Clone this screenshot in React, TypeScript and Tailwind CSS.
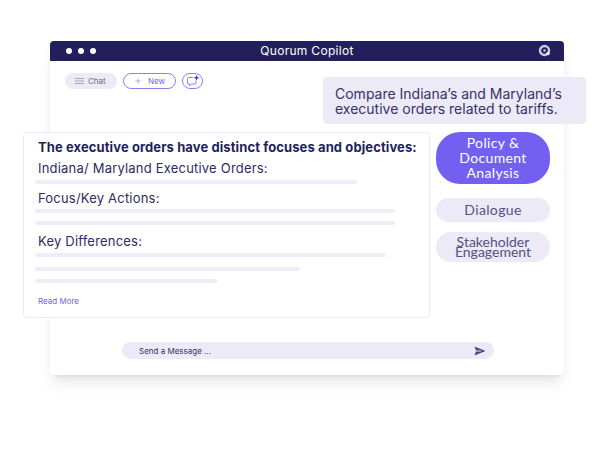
import { Plus } from "lucide-react";

const bar = "h-1 shrink-0 rounded-full bg-[#eeedf8]";
const line = "text-[13px] leading-5 tracking-[0.2px]";

export default function App() {
  return (
    <div className="w-[600px] h-[452px] bg-white pt-[41px] pl-[50px] overflow-hidden font-['Inter',sans-serif]">
      <div className="w-[514px] rounded-sm bg-white shadow-lg">
        <div className="h-5 grid grid-cols-3 items-center px-4 rounded-t-sm bg-[#231f5c]">
          <div className="flex gap-1.5">
            <div className="size-1.5 rounded-full bg-white" />
            <div className="size-1.5 rounded-full bg-white" />
            <div className="size-1.5 rounded-full bg-white" />
          </div>
          <span className="text-center text-xs tracking-wide whitespace-nowrap text-white">Quorum Copilot</span>
          <svg viewBox="0 0 14 14" className="size-3.5 justify-self-end -mr-1">
            <circle cx="6.5" cy="6.5" r="4.5" fill="none" stroke="#c9c8dc" strokeWidth="2.4" />
            <circle cx="6.5" cy="6.5" r="1.2" fill="#c9c8dc" />
            <circle cx="10" cy="9.5" r="1.7" fill="#fff" />
          </svg>
        </div>

        <div className="pt-3 pb-4">
          <div className="flex items-center gap-1.5 pl-[15px]">
            <div className="w-13 h-4 flex items-center gap-1 pl-2.5 rounded-full bg-[#eceaf6] text-[8px] text-[#6b6a80]">
              <svg viewBox="0 0 9 6" className="w-[9px] h-1.5" fill="none" stroke="#8a899c" strokeWidth="0.7">
                <path d="M0 0.5H9M0 3H9M0 5.5H9" />
              </svg>
              Chat
            </div>
            <div className="w-[53px] h-4 flex items-center justify-center gap-1.5 rounded-full border border-[#8f7ef5] text-[8px] text-[#7360f0]">
              <Plus className="size-2" strokeWidth={1.5} />
              New
            </div>
            <div className="w-[21px] h-4 flex items-center justify-center rounded-full border border-[#8f7ef5]">
              <svg viewBox="0 0 14 12" className="w-3.5 h-3" fill="none">
                <path d="M7 2.5H2.5a1 1 0 0 0-1 1V8a1 1 0 0 0 1 1h1v1.6L5.5 9H9a1 1 0 0 0 1-1V5.5" stroke="#7360f0" strokeWidth="0.8" />
                <path d="M10.5 0l.9 1.9 1.9.9-1.9.9-.9 1.9-.9-1.9-1.9-.9 1.9-.9z" fill="#4f3ce0" />
              </svg>
            </div>
          </div>

          <div className="flex justify-end -mt-3 -mr-[22px]">
            <div className="w-[263px] h-[47px] flex items-center pl-3 rounded-sm bg-[#eceaf6] text-sm leading-[15px] text-[#35316b]">
              <p>
                Compare Indiana’s and Maryland’s
                <br />
                executive orders related to tariffs.
              </p>
            </div>
          </div>

          <div className="flex gap-1.5 mt-2 -ml-[27px]">
            <div className="w-[407px] h-[186px] flex flex-col px-3.5 pt-1 rounded-sm border border-[#eceaf6] bg-white text-[#2f2b63]">
              <p className="text-[13px] leading-5 font-bold tracking-[0.1px] whitespace-nowrap text-[#231f5c]">
                The executive orders have distinct focuses and objectives:
              </p>
              <p className={`${line} mt-px`}>Indiana/ Maryland Executive Orders:</p>
              <div className={`${bar} w-[322px] mt-0.5 -ml-[3px]`} />
              <p className={`${line} mt-1`}>Focus/Key Actions:</p>
              <div className={`${bar} w-90 mt-px -ml-[3px]`} />
              <div className={`${bar} w-90 mt-2 -ml-[3px]`} />
              <p className={`${line} mt-1.5`}>Key Differences:</p>
              <div className={`${bar} w-[351px] mt-0.5 -ml-[3px]`} />
              <div className={`${bar} w-[265px] mt-2.5 -ml-[3px]`} />
              <div className={`${bar} w-[182px] mt-2 -ml-[3px]`} />
              <p className="mt-3 text-[8px] leading-3 text-[#7360f0]">Read More</p>
            </div>

            <div className="w-[114px] flex flex-col font-['Lato',sans-serif] text-sm text-center">
              <div className="h-[52px] flex items-center justify-center pb-0.5 rounded-3xl bg-[#7360f0] leading-[15px] tracking-wide text-white">
                <p>
                  Policy &amp;
                  <br />
                  Document
                  <br />
                  Analysis
                </p>
              </div>
              <div className="h-6 mt-3.5 flex items-center justify-center rounded-full bg-[#eceaf6] tracking-wide text-[#55527f]">
                Dialogue
              </div>
              <div className="h-7.5 mt-2.5 flex items-center justify-center rounded-full bg-[#eceaf6] leading-[10px] text-[#55527f]">
                <p>
                  Stakeholder
                  <br />
                  Engagement
                </p>
              </div>
            </div>
          </div>

          <div className="ml-18 mt-6 w-[372px] h-[17px] flex items-center justify-between pl-[17px] pr-2 rounded-full bg-[#eceaf6]">
            <span className="text-[8px] text-[#35316b]">Send a Message ...</span>
            <svg viewBox="0 0 12 10" className="w-3 h-2.5">
              <path d="M0.5 0.5L11.5 5L0.5 9.5L2 5.6H7V4.4H2z" fill="#4a4680" />
            </svg>
          </div>
        </div>
      </div>
    </div>
  );
}
